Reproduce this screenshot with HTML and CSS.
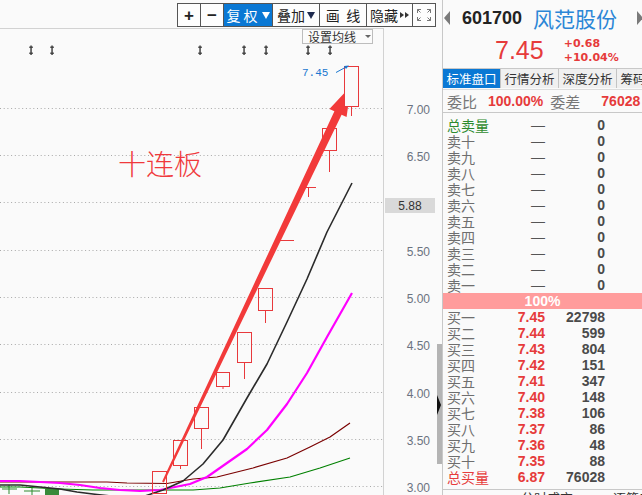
FILE: index.html
```
<!DOCTYPE html>
<html lang="zh-CN">
<head>
  <meta charset="UTF-8" />
  <title>601700 风范股份</title>
  <link rel="stylesheet" href="styles.css">
</head>
<body>

<div class="app">
  <div class="chart-pane">
    <div class="toolbar-row">
      <div class="toolbar">
        <span class="tb-btn tb-sq sym">+</span>
        <span class="tb-btn tb-sq sym">−</span>
        <span class="tb-btn tb-on">复 权<i class="tri-down"></i></span>
        <span class="tb-btn">叠加<i class="tri-down dark"></i></span>
        <span class="tb-btn">画&nbsp;&nbsp;线</span>
        <span class="tb-btn">隐藏<i class="tri-r"></i><i class="tri-r"></i></span>
        <span class="tb-btn tb-sq">
          <svg width="14" height="12" viewBox="0 0 14 12">
            <path d="M0.5 4V0.5H4M0.5 0.5L3.5 3.5M13.5 4V0.5H10M13.5 0.5L10.5 3.5M0.5 8V11.5H4M0.5 11.5L3.5 8.5M13.5 8V11.5H10M13.5 11.5L10.5 8.5" fill="none" stroke="#777" stroke-width="1"/>
          </svg>
        </span>
      </div>
    </div>

    <button class="ma-setting">设置均线<i class="caret"></i></button>

    <!-- K-line chart, drawn in page coordinates -->
    <svg class="chart" width="437" height="467" viewBox="0 28 437 467">
      <line class="frame" x1="0" y1="28.5" x2="383" y2="28.5"/>
      <line class="frame" x1="383.5" y1="28" x2="383.5" y2="495"/>

      <g class="grid">
        <line x1="0" y1="108.5" x2="384" y2="108.5"/>
        <line x1="0" y1="155.5" x2="384" y2="155.5"/>
        <line x1="0" y1="202.5" x2="384" y2="202.5"/>
        <line x1="0" y1="250.5" x2="384" y2="250.5"/>
        <line x1="0" y1="297.5" x2="384" y2="297.5"/>
        <line x1="0" y1="344.5" x2="384" y2="344.5"/>
        <line x1="0" y1="392.5" x2="384" y2="392.5"/>
        <line x1="0" y1="439.5" x2="384" y2="439.5"/>
        <line x1="0" y1="486.5" x2="384" y2="486.5"/>
      </g>

      <g class="marks">
        <path d="M30.3 45.5h1.5v1h1v1.5h-1v4.5h1v1.5h-1v1h-1.5v-1h-1v-1.5h1v-4.5h-1v-1.5h1z"/>
        <path d="M51.3 45.5h1.5v1h1v1.5h-1v4.5h1v1.5h-1v1h-1.5v-1h-1v-1.5h1v-4.5h-1v-1.5h1z"/>
        <path d="M199.3 45.5h1.5v1h1v1.5h-1v4.5h1v1.5h-1v1h-1.5v-1h-1v-1.5h1v-4.5h-1v-1.5h1z"/>
        <path d="M243.3 45.5h1.5v1h1v1.5h-1v4.5h1v1.5h-1v1h-1.5v-1h-1v-1.5h1v-4.5h-1v-1.5h1z"/>
        <path d="M265.3 45.5h1.5v1h1v1.5h-1v4.5h1v1.5h-1v1h-1.5v-1h-1v-1.5h1v-4.5h-1v-1.5h1z"/>
        <path d="M307.3 45.5h1.5v1h1v1.5h-1v4.5h1v1.5h-1v1h-1.5v-1h-1v-1.5h1v-4.5h-1v-1.5h1z"/>
        <path d="M329.3 45.5h1.5v1h1v1.5h-1v4.5h1v1.5h-1v1h-1.5v-1h-1v-1.5h1v-4.5h-1v-1.5h1z"/>
      </g>

      <!-- old small candles bottom left -->
      <g class="old">
        <path d="M2 489h15M9 485v9M24 491h16M32 487v8"/>
        <rect x="45" y="489" width="14" height="7"/>
      </g>

      <g class="ma">
        <polyline class="ma30" points="0,487 20,487 40,488 60,489 93,490 193,490 220,488 250,483 290,477 320,468 350,458"/>
        <polyline class="ma20" points="0,482 107,482 127,483 167,483.5 193,479 217,477 253,468 287,458 310,447 330,437 350,423"/>
        <polyline class="ma10" points="0,481 20,481 40,482 60,483 80,485 100,488 120,490 140,491 160,490 175,487 190,484 207,477 227,463 247,449 267,430 287,404 307,373 327,337 352,293"/>
        <polyline class="ma5" points="0,485 20,485 40,487 60,489 77,492 97,494.5 120,497 145,496 163,490 183,481 203,464 223,440 247,398 267,364 287,322 307,279 327,232 352,183"/>
      </g>

      <g class="candles">
        <rect x="152.5" y="471.5" width="14" height="22"/>
        <rect x="173.5" y="440.5" width="14" height="25"/>
        <line x1="180.5" y1="465.5" x2="180.5" y2="469"/>
        <rect x="194.5" y="407.5" width="14" height="21"/>
        <line x1="201.5" y1="428.5" x2="201.5" y2="449"/>
        <rect x="216.5" y="372.5" width="13" height="14"/>
        <line x1="223" y1="386.5" x2="223" y2="389"/>
        <rect x="237.5" y="332.5" width="14" height="30"/>
        <line x1="244.5" y1="362.5" x2="244.5" y2="379"/>
        <rect x="258.5" y="288.5" width="14" height="22"/>
        <line x1="265.5" y1="310.5" x2="265.5" y2="323"/>
        <line x1="280" y1="240.5" x2="294" y2="240.5"/>
        <line x1="301" y1="187.5" x2="316" y2="187.5"/>
        <line x1="308.5" y1="187.5" x2="308.5" y2="197"/>
        <rect x="322.5" y="128.5" width="14" height="22"/>
        <line x1="329.5" y1="150.5" x2="329.5" y2="172"/>
        <line x1="351.5" y1="106.5" x2="351.5" y2="116"/>
      </g>

      <polygon class="arrow" points="162.1,481.6 334.4,111.3 329.4,108.9 350.9,85.9 346.6,117.1 341.6,114.7 163.9,482.4"/>
      <rect class="top-candle" x="344.5" y="66.5" width="14" height="40"/>

      <text class="note" x="118" y="175">十连板</text>
      <text class="hi" x="302" y="76">7.45</text>
      <path class="hi-line" d="M336 72.5L347 66.5"/>
      <path class="hi-head" d="M349 65.5l-5 0.5 2 3z"/>

      <g class="axis">
        <text x="430" y="114">7.00</text>
        <text x="430" y="161">6.50</text>
        <text x="430" y="256">5.50</text>
        <text x="430" y="303">5.00</text>
        <text x="430" y="350">4.50</text>
        <text x="430" y="397.5">4.00</text>
        <text x="430" y="445">3.50</text>
        <text x="430" y="492">3.00</text>
      </g>
      <rect class="cur-box" x="385" y="198" width="50" height="15"/>
      <text class="cur" x="410" y="210">5.88</text>
    </svg>
  </div>

  <div class="scroll">
    <div class="thumb"><i class="scroll-tri"></i></div>
  </div>

  <div class="quote">
    <div class="q-head">
      <i class="arrow-l"></i>
      <span class="code">601700</span>
      <span class="name">风范股份</span>
      <i class="arrow-r"></i>
    </div>
    <div class="q-price">
      <span class="last">7.45</span>
      <div class="chg">
        <span>+0.68</span>
        <span>+10.04%</span>
      </div>
    </div>
    <div class="tabs">
      <span class="tab active">标准盘口</span>
      <span class="tab">行情分析</span>
      <span class="tab">深度分析</span>
      <span class="tab">筹码分布</span>
    </div>
    <div class="ratio">
      <span class="lbl">委比</span>
      <span class="val">100.00%</span>
      <span class="lbl lbl-2">委差</span>
      <span class="val">76028</span>
    </div>

    <div class="book sell">
      <div class="row total-sell"><span>总卖量</span><span class="dash">—</span><span class="vol">0</span></div>
      <div class="row"><span>卖十</span><span class="dash">—</span><span class="vol">0</span></div>
      <div class="row"><span>卖九</span><span class="dash">—</span><span class="vol">0</span></div>
      <div class="row"><span>卖八</span><span class="dash">—</span><span class="vol">0</span></div>
      <div class="row"><span>卖七</span><span class="dash">—</span><span class="vol">0</span></div>
      <div class="row"><span>卖六</span><span class="dash">—</span><span class="vol">0</span></div>
      <div class="row"><span>卖五</span><span class="dash">—</span><span class="vol">0</span></div>
      <div class="row"><span>卖四</span><span class="dash">—</span><span class="vol">0</span></div>
      <div class="row"><span>卖三</span><span class="dash">—</span><span class="vol">0</span></div>
      <div class="row"><span>卖二</span><span class="dash">—</span><span class="vol">0</span></div>
      <div class="row"><span>卖一</span><span class="dash">—</span><span class="vol">0</span></div>
    </div>

    <div class="bar">100%</div>

    <div class="book buy">
      <div class="row"><span>买一</span><span class="price">7.45</span><span class="vol">22798</span></div>
      <div class="row"><span>买二</span><span class="price">7.44</span><span class="vol">599</span></div>
      <div class="row"><span>买三</span><span class="price">7.43</span><span class="vol">804</span></div>
      <div class="row"><span>买四</span><span class="price">7.42</span><span class="vol">151</span></div>
      <div class="row"><span>买五</span><span class="price">7.41</span><span class="vol">347</span></div>
      <div class="row"><span>买六</span><span class="price">7.40</span><span class="vol">148</span></div>
      <div class="row"><span>买七</span><span class="price">7.38</span><span class="vol">106</span></div>
      <div class="row"><span>买八</span><span class="price">7.37</span><span class="vol">86</span></div>
      <div class="row"><span>买九</span><span class="price">7.36</span><span class="vol">48</span></div>
      <div class="row"><span>买十</span><span class="price">7.35</span><span class="vol">88</span></div>
      <div class="row total-buy"><span>总买量</span><span class="price">6.87</span><span class="vol">76028</span></div>
    </div>

    <div class="bottom-tabs">
      <span>分时成交</span>
      <span>逐笔成交</span>
    </div>
  </div>
</div>

</body>
</html>
```

FILE: styles.css
```
:root {
  --bg: #fafafa;
  --red: #e63b3b;
  --blue: #0a78d4;
  --line: #c8c8c8;
  --gray-text: #6e6e6e;
}

* {
  box-sizing: border-box;
}

body {
  margin: 0;
  width: 642px;
  height: 495px;
  overflow: hidden;
  background: var(--bg);
  font-family: "Noto Sans CJK SC", sans-serif;
  color: #222;
}

.app {
  display: flex;
  height: 495px;
}

/* ---------- chart side ---------- */

.chart-pane {
  position: relative;
  width: 437px;
  flex: 0 0 437px;
  display: flex;
  flex-direction: column;
}

.toolbar-row {
  height: 28px;
  flex-shrink: 0;
  padding-top: 3px;
  padding-right: 1px;
  display: flex;
  justify-content: flex-end;
}

.toolbar {
  display: flex;
  height: 24px;
  border: 1px solid #555;
  border-left: none;
  background: #fdfdfd;
}

.tb-btn {
  display: flex;
  align-items: center;
  justify-content: center;
  width: 46px;
  border-left: 1px solid #555;
  font-size: 14px;
  line-height: 1;
  color: #222;
}

.tb-btn:nth-child(3) { width: 49px; }
.tb-btn:nth-child(4) { width: 47px; }
.tb-btn:nth-child(5) { width: 47px; }

.tb-sq {
  width: 23px;
}

.sym {
  font-family: "Liberation Sans", sans-serif;
  font-weight: bold;
  font-size: 17px;
}

.tb-on {
  background: var(--blue);
  color: #fff;
}

.tri-down {
  display: inline-block;
  margin-left: 4px;
  border-left: 4px solid transparent;
  border-right: 4px solid transparent;
  border-top: 7px solid #fff;
}

.tri-down.dark {
  margin-left: 2px;
  border-top-color: #1d2a4e;
}

.tri-r {
  display: inline-block;
  border-top: 3.5px solid transparent;
  border-bottom: 3.5px solid transparent;
  border-left: 4px solid #333;
  margin-left: 1px;
}

.tri-r:first-of-type {
  margin-left: 2px;
}

.ma-setting {
  position: absolute;
  left: 302px;
  top: 29px;
  width: 71px;
  height: 15px;
  padding: 0 0 0 5px;
  border: 1px solid #bdbdbd;
  background: #fbfbfb;
  font-family: "Noto Sans CJK SC", sans-serif;
  font-size: 12px;
  line-height: 13px;
  white-space: nowrap;
  color: #333;
  display: flex;
  align-items: center;
}

.caret {
  margin-left: 9px;
  border-left: 3px solid transparent;
  border-right: 3px solid transparent;
  border-top: 3px solid #666;
}

.chart {
  display: block;
  flex: 0 0 auto;
}

.frame {
  stroke: #d2d2d2;
  stroke-width: 1;
}

.grid line {
  stroke: #a8a8a8;
  stroke-width: 1;
  stroke-dasharray: 1 2.7;
}

.marks path {
  fill: #444;
}

.old path {
  stroke: #2e8b2e;
  stroke-width: 1;
  fill: none;
}

.old rect {
  fill: #3a8a3a;
}

.ma polyline {
  fill: none;
  stroke-linejoin: round;
}

.ma5 { stroke: #2b2b2b; stroke-width: 1.6; }
.ma10 { stroke: #ff00ff; stroke-width: 2.2; }
.ma20 { stroke: #7a0000; stroke-width: 1.2; }
.ma30 { stroke: #008000; stroke-width: 1.2; }

.candles rect,
.top-candle {
  fill: none;
  stroke: #e8393c;
  stroke-width: 1;
}

.top-candle {
  fill: var(--bg);
}

.candles line {
  stroke: #e8393c;
  stroke-width: 1;
}

.arrow {
  fill: #f23a3a;
}

.note {
  font-family: "Noto Sans CJK SC", sans-serif;
  font-weight: 300;
  font-size: 28px;
  fill: #f0393c;
}

.hi {
  font-family: "Liberation Mono", monospace;
  font-size: 11px;
  fill: #1a78d0;
}

.hi-line {
  stroke: #1a78d0;
  stroke-width: 1;
}

.hi-head {
  fill: #1a78d0;
}

.axis text {
  font-family: "Liberation Sans", sans-serif;
  font-size: 12px;
  fill: #6b7280;
  text-anchor: end;
}

.cur-box {
  fill: #d9d9d9;
}

.cur {
  font-family: "Liberation Sans", sans-serif;
  font-size: 12px;
  fill: #333;
  text-anchor: middle;
}

/* ---------- scroll strip ---------- */

.scroll {
  flex: 0 0 5px;
  padding-top: 344px;
}

.thumb {
  position: relative;
  height: 120px;
  background: #b4b4b4;
}

.scroll-tri {
  position: absolute;
  left: 0;
  top: 51px;
  border-top: 10px solid transparent;
  border-bottom: 10px solid transparent;
  border-left: 4px solid #111;
}

/* ---------- quote panel ---------- */

.quote {
  flex: 1;
  min-width: 0;
  border-left: 1px solid var(--line);
  display: flex;
  flex-direction: column;
}

.quote > * {
  flex-shrink: 0;
}

.q-head {
  height: 33px;
  display: flex;
  align-items: center;
  padding-top: 3px;
  white-space: nowrap;
}

.arrow-l {
  margin-left: 1px;
  border-top: 7px solid transparent;
  border-bottom: 7px solid transparent;
  border-right: 6px solid #7a7a7a;
}

.code {
  margin-left: 12px;
  font-family: "Liberation Sans", sans-serif;
  font-weight: bold;
  font-size: 18px;
  color: #222;
}

.name {
  margin-left: 11px;
  font-size: 21px;
  line-height: 1;
  color: #2b86d6;
}

.arrow-r {
  margin-left: auto;
  margin-right: -1px;
  border-top: 7px solid transparent;
  border-bottom: 7px solid transparent;
  border-left: 6px solid #7a7a7a;
}

.q-price {
  height: 35px;
  display: flex;
  align-items: center;
  padding-left: 52px;
  color: var(--red);
}

.last {
  font-family: "Liberation Sans", sans-serif;
  font-size: 25px;
}

.chg {
  margin-left: 20px;
  display: flex;
  flex-direction: column;
  font-family: "DejaVu Sans", sans-serif;
  font-weight: bold;
  font-size: 11px;
  line-height: 14px;
}

.tabs {
  height: 21px;
  border-top: 1px solid var(--line);
  display: flex;
  white-space: nowrap;
  overflow: hidden;
}

.tab {
  flex: 0 0 58px;
  height: 19px;
  border-right: 1px solid #c4c4c4;
  background: #f0f0f0;
  font-size: 12.5px;
  line-height: 19px;
  text-align: center;
  color: #333;
}

.tab.active {
  background: var(--blue);
  color: #fff;
}

.ratio {
  height: 24px;
  border-top: 1px solid #ddd;
  border-bottom: 1px solid var(--line);
  display: flex;
  align-items: center;
  padding-left: 4px;
  white-space: nowrap;
}

.ratio .lbl {
  font-size: 15px;
  color: #777;
}

.ratio .val {
  margin-left: 11px;
  font-family: "Liberation Sans", sans-serif;
  font-weight: bold;
  font-size: 14px;
  color: var(--red);
}

.ratio .lbl-2 {
  margin-left: 7px;
}

.ratio .val:last-child {
  margin-left: 21px;
}

.book {
  display: flex;
  flex-direction: column;
}

.book.sell {
  padding-top: 4px;
}

.row {
  display: grid;
  grid-template-columns: 58px 40px 60px;
  height: 16px;
  padding-left: 4px;
  font-size: 14px;
  line-height: 16px;
  color: var(--gray-text);
}

.row .dash {
  text-align: right;
  font-family: "Liberation Sans", sans-serif;
  font-size: 14px;
  color: #555;
}

.row .price {
  text-align: right;
  font-family: "Liberation Sans", sans-serif;
  font-weight: bold;
  color: var(--red);
}

.row .vol {
  text-align: right;
  font-family: "Liberation Sans", sans-serif;
  font-weight: bold;
  color: #4a4a4a;
}

.total-sell > span:first-child {
  color: #2e8b2e;
}

.total-buy > span:first-child {
  color: var(--red);
}

.bar {
  height: 16px;
  background: #ff9c9c;
  color: #fff;
  font-family: "Liberation Sans", sans-serif;
  font-weight: bold;
  font-size: 14px;
  line-height: 16px;
  text-align: center;
}

.bottom-tabs {
  margin-top: 4px;
  border-top: 1px solid var(--line);
  display: flex;
  gap: 40px;
  padding-left: 78px;
  font-size: 13px;
  line-height: 16px;
  color: #333;
  white-space: nowrap;
}
```
